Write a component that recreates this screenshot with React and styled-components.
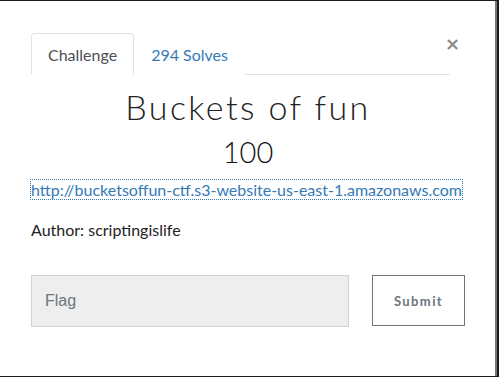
import React from "react";
import styled, { createGlobalStyle } from "styled-components";

const Global = createGlobalStyle`
  html, body {
    margin: 0;
    padding: 0;
    background: #1b1b1b;
  }
  body {
    font-family: Lato, "Open Sans", sans-serif;
  }
`;

const Modal = styled.div`
  box-sizing: border-box;
  margin-top: 1px;
  width: 497px;
  height: 375px;
  background: #fff;
  border-right: 2px solid #777;
  position: relative;
  padding: 32px 30px 0 31px;
`;

const Close = styled.button`
  position: absolute;
  top: 34px;
  right: 35px;
  border: 0;
  background: none;
  padding: 0;
  font-family: "DejaVu Sans", sans-serif;
  font-size: 18px;
  font-weight: bold;
  color: #8a8a8a;
  line-height: 1;
  cursor: pointer;
`;

const Nav = styled.ul`
  display: flex;
  list-style: none;
  margin: 0;
  padding: 0;
  width: 419px;
  border-bottom: 1px solid #dee2e6;
`;

const Tab = styled.li`
  box-sizing: border-box;
  height: 42px;
  margin-bottom: -1px;
  padding: 0 16px;
  display: flex;
  align-items: center;
  font-size: 16px;
  border: 1px solid ${(p) => (p.$active ? "#dee2e6" : "transparent")};
  border-bottom-color: ${(p) => (p.$active ? "#fff" : "transparent")};
  border-radius: 4px 4px 0 0;
  background: #fff;
  color: ${(p) => (p.$active ? "#495057" : "#337ab7")};
`;

const Body = styled.div`
  display: flex;
  flex-direction: column;
`;

const Title = styled.h3`
  margin: 12px 0 0;
  text-align: center;
  font-family: Lato, sans-serif;
  font-weight: 300;
  font-size: 34px;
  letter-spacing: 2.4px;
  line-height: 40px;
  color: #222;
`;

const Points = styled.h4`
  margin: 8px 0 0;
  text-align: center;
  font-weight: 300;
  font-size: 29px;
  line-height: 34px;
  color: #111;
`;

const Link = styled.a`
  align-self: flex-start;
  margin-top: 11px;
  font-size: 16px;
  line-height: 19px;
  color: #337ab7;
  text-decoration: none;
  outline: 1px dotted #337ab7;
`;

const Author = styled.p`
  margin: 21px 0 0;
  font-size: 16px;
  color: #222;
`;

const Form = styled.form`
  display: flex;
  gap: 23px;
  margin-top: 36px;
`;

const Input = styled.input`
  box-sizing: border-box;
  flex-shrink: 0;
  width: 318px;
  height: 52px;
  border: 1px solid #ced4da;
  background: #eee;
  padding: 0 13px;
  font-family: "Liberation Sans", sans-serif;
  font-size: 16px;
  color: #495057;
  &::placeholder {
    color: #6c757d;
  }
`;

const Submit = styled.button`
  box-sizing: border-box;
  flex-shrink: 0;
  width: 93px;
  height: 51px;
  border: 1px solid #6c757d;
  background: #fff;
  font-family: Lato, sans-serif;
  font-weight: bold;
  font-size: 13px;
  letter-spacing: 1.4px;
  color: #6c757d;
`;

export default function App() {
  return (
    <>
      <Global />
      <Modal>
        <Close>×</Close>
        <Nav>
          <Tab $active>Challenge</Tab>
          <Tab>294 Solves</Tab>
        </Nav>
        <Body>
          <Title>Buckets of fun</Title>
          <Points>100</Points>
          <Link href="#">http://bucketsoffun-ctf.s3-website-us-east-1.amazonaws.com</Link>
          <Author>Author: scriptingislife</Author>
          <Form onSubmit={(e) => e.preventDefault()}>
            <Input placeholder="Flag" />
            <Submit type="submit">Submit</Submit>
          </Form>
        </Body>
      </Modal>
    </>
  );
}
